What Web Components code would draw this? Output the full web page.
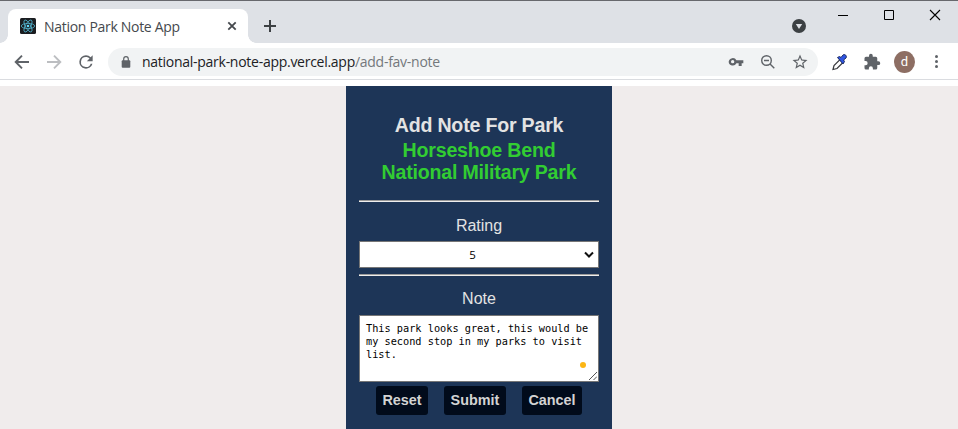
<!DOCTYPE html>
<html lang="en">
<head>
<meta charset="utf-8">
<title>Nation Park Note App</title>
<style>
html, body { margin: 0; height: 100%; overflow: hidden; }
body { background: #f0ecec; font-family: "Liberation Sans", Arial, sans-serif; }
</style>
</head>
<body>
<browser-window>
  <browser-tab slot="tab">Nation Park Note App</browser-tab>
  <browser-toolbar slot="toolbar">
    <span slot="host">national-park-note-app.vercel.app</span><span slot="path">/add-fav-note</span>
  </browser-toolbar>
  <note-panel>
    <span slot="title">Add Note For Park</span>
    <span slot="park">Horseshoe Bend<br>National Military Park</span>
    <rating-select slot="rating">5</rating-select>
    <note-area slot="note">This park looks great, this would be<br>my second stop in my parks to visit<br>list.</note-area>
    <note-button slot="actions" style="width:52px">Reset</note-button>
    <note-button slot="actions" style="width:62px">Submit</note-button>
    <note-button slot="actions" style="width:60px">Cancel</note-button>
  </note-panel>
</browser-window>
<script>
const define = (name, html) => {
  const t = document.createElement('template');
  t.innerHTML = html;
  customElements.define(name, class extends HTMLElement {
    constructor() {
      super();
      this.attachShadow({ mode: 'open' }).append(t.content.cloneNode(true));
    }
  });
};

define('browser-window', `
<style>
:host { display: flex; flex-direction: column; height: 100vh; }
.strip { flex: none; box-sizing: border-box; height: 43px; border-top: 1px solid #67686d; background: #dee1e6; display: flex; align-items: flex-end; padding-left: 8px; }
.plus { margin: 0 0 10px 15px; }
.spacer { flex: 1; }
.drop { margin: 0 31px 10px 0; }
.controls { align-self: flex-start; display: flex; gap: 34px; padding: 8px 17px 0 0; }
svg { display: block; }
main { flex: 1; display: flex; justify-content: center; min-height: 0; }
</style>
<div class="strip">
  <slot name="tab"></slot>
  <svg class="plus" width="14" height="14" stroke="#3c4043" stroke-width="2"><path d="M7 1v12M1 7h12"/></svg>
  <div class="spacer"></div>
  <svg class="drop" width="14" height="14"><circle cx="7" cy="7" r="7" fill="#3c4043"/><path d="M3.8 5h6.4L7 10z" fill="#dee1e6"/></svg>
  <div class="controls">
    <svg width="12" height="12" stroke="#000"><path d="M1 6.5h10"/></svg>
    <svg width="12" height="12" stroke="#000" fill="none"><path d="M1.500 1.500h9v9h-9z"/></svg>
    <svg width="12" height="12" stroke="#000" stroke-width="1.100"><path d="M1 1l10 10M11 1L1 11"/></svg>
  </div>
</div>
<slot name="toolbar"></slot>
<main><slot></slot></main>`);

define('browser-tab', `
<style>
:host { position: relative; display: flex; align-items: center; box-sizing: border-box; width: 240px; height: 34px; background: #fff; border-radius: 8px 8px 0 0; padding: 0 11px 0 12px; font: 14px "Open Sans", sans-serif; letter-spacing: -.3px; color: #45494d; }
:host::before, :host::after { content: ""; position: absolute; bottom: 0; width: 8px; height: 8px; }
:host::before { left: -8px; background: radial-gradient(circle at 0 0, #dee1e6 7.500px, #fff 8px); }
:host::after { right: -8px; background: radial-gradient(circle at 100% 0, #dee1e6 7.500px, #fff 8px); }
.label { flex: 1; margin-left: 8px; white-space: nowrap; }
svg { flex: none; display: block; }
</style>
<svg width="16" height="16" viewBox="0 0 16 16"><rect width="16" height="16" rx="1.500" fill="#1b1d20"/><g fill="none" stroke="#4faec8" stroke-width=".85"><ellipse cx="8" cy="8" rx="6.700" ry="2.600"/><ellipse cx="8" cy="8" rx="6.700" ry="2.600" transform="rotate(60 8 8)"/><ellipse cx="8" cy="8" rx="6.700" ry="2.600" transform="rotate(120 8 8)"/></g><circle cx="8" cy="8" r="1.300" fill="#61dafb"/></svg>
<span class="label"><slot></slot></span>
<svg width="10" height="10" stroke="#45494d" stroke-width="1.800"><path d="M1.300 1.300l7.400 7.400M8.700 1.300L1.300 8.700"/></svg>`);

define('browser-toolbar', `
<style>
:host { flex: none; box-sizing: border-box; display: flex; align-items: center; height: 43px; padding: 0 13px 6px 12px; background: linear-gradient(#fff 36px, #dadce0 36px, #dadce0 37px, #fff 37px); }
svg { display: block; flex: none; }
.back, .fwd { margin-right: 12px; }
.bar { flex: none; box-sizing: border-box; width: 710px; height: 28px; margin: 0 12px 0 12px; border-radius: 14px; background: #f1f3f4; display: flex; align-items: center; padding: 0 9px 0 13px; }
.url { flex: 1; display: flex; margin-left: 11px; font: 14px "Open Sans", sans-serif; letter-spacing: -.27px; color: #202124; white-space: nowrap; }
.path { color: #74787c; }
.key { margin-right: 16px; }
.lens { margin-right: 15px; }
.avatar { display: grid; place-items: center; width: 22px; height: 22px; border-radius: 50%; background: #8d6e63; color: #fff; font: 13px Roboto, sans-serif; margin: 0 12px 0 13px; }
.drop { margin-right: 15px; }
</style>
<svg class="back" width="20" height="20" viewBox="0 0 20 20" fill="none" stroke="#5f6368" stroke-width="1.900"><path d="M17 10H4.300M10 3.700L3.700 10l6.300 6.300"/></svg>
<svg class="fwd" width="20" height="20" viewBox="0 0 20 20" fill="none" stroke="#bcbec1" stroke-width="1.900"><path d="M3 10h12.700M10 3.700l6.300 6.300-6.300 6.300"/></svg>
<svg width="20" height="20" viewBox="0 0 24 24" fill="#5f6368"><path d="M17.650 6.350A7.960 7.960 0 0 0 12 4a8 8 0 1 0 7.730 10h-2.080A6 6 0 1 1 12 6c1.660 0 3.140.69 4.220 1.780L13 11h7V4z"/></svg>
<div class="bar">
  <svg width="10" height="12" viewBox="0 0 10 12"><rect x=".7" y="4.300" width="8.600" height="7.400" rx="1" fill="#5f6368"/><path d="M2.700 5V3a2.300 2.300 0 0 1 4.600 0v2" fill="none" stroke="#5f6368" stroke-width="1.200"/></svg>
  <div class="url"><slot name="host"></slot><span class="path"><slot name="path"></slot></span></div>
  <svg class="key" width="16" height="16" viewBox="0 0 24 24" fill="#5f6368"><path d="M12.650 9.500A6.200 6.200 0 0 0 1 11.500a6.200 6.200 0 0 0 11.650 2.500H16v4h4.500v-4H23V9.500zM7 14a2.500 2.500 0 1 1 0-5 2.500 2.500 0 0 1 0 5z"/></svg>
  <svg class="lens" width="16" height="16" viewBox="0 0 16 16" fill="none" stroke="#5f6368" stroke-width="1.400"><circle cx="6.500" cy="6.500" r="4.800"/><path d="M10 10l4.300 4.300M4 6.500h5"/></svg>
  <svg width="18" height="18" viewBox="0 0 24 24" fill="#5f6368"><path d="M22 9.240l-7.190-.62L12 2 9.190 8.630 2 9.240l5.460 4.730L5.820 21 12 17.270 18.180 21l-1.630-7.030L22 9.240zM12 15.400l-3.760 2.270 1-4.280-3.320-2.880 4.380-.38L12 6.100l1.710 4.040 4.380.38-3.320 2.880 1 4.280L12 15.400z"/></svg>
</div>
<svg class="drop" width="18" height="18" viewBox="0 0 18 18"><path d="M3 16.500l1-4 6-6 3 3L7 15.500z" fill="#fff" stroke="#38393d" stroke-width="1.200"/><path d="M7.500 4.500L9.500 3.500 11 4.500l2-2.500c1.600-1.500 4.500 1 3 3l-2.500 2 1 1.500L13 11z" fill="#2f55e3" stroke="#1d2b60"/></svg>
<svg width="18" height="18" viewBox="0 0 24 24" fill="#5f6368"><path d="M20.500 11H19V7a2 2 0 0 0-2-2h-4V3.500a2.500 2.500 0 0 0-5 0V5H4a2 2 0 0 0-2 2v3.800h1.500a2.700 2.700 0 0 1 0 5.400H2V20a2 2 0 0 0 2 2h3.800v-1.500a2.700 2.700 0 0 1 5.400 0V22H17a2 2 0 0 0 2-2v-4h1.500a2.500 2.500 0 0 0 0-5z"/></svg>
<div class="avatar">d</div>
<svg width="18" height="18" fill="#5f6368"><circle cx="9.500" cy="3.500" r="1.500"/><circle cx="9.500" cy="8.500" r="1.500"/><circle cx="9.500" cy="13.500" r="1.500"/></svg>`);

define('note-panel', `
<style>
:host { box-sizing: border-box; width: 266px; height: 100%; background: #1d3557; color: #e3e3e3; text-align: center; padding: 28px 13px 0; overflow: hidden; }
h1, h2 { margin: 0; font-size: 19.600px; letter-spacing: -.2px; line-height: 22px; font-weight: bold; white-space: nowrap; }
h2 { margin-top: 3px; color: #32cd32; }
.rule { height: 1px; border-top: 1px solid #9a9a9a; background: #eee; }
.r1 { margin-top: 17px; }
.r2 { margin-top: 6px; }
.label { font-size: 16px; line-height: 18px; }
.l1 { margin: 15px 0 6px; }
.l2 { margin: 14px 0 7px; }
.actions { display: flex; justify-content: center; gap: 16px; margin-top: 4px; }
</style>
<h1><slot name="title"></slot></h1>
<h2><slot name="park"></slot></h2>
<div class="rule r1"></div>
<div class="label l1">Rating</div>
<slot name="rating"></slot>
<div class="rule r2"></div>
<div class="label l2">Note</div>
<slot name="note"></slot>
<div class="actions"><slot name="actions"></slot></div>`);

define('rating-select', `
<style>
:host { display: flex; align-items: center; box-sizing: border-box; height: 27px; border: 1px solid #767676; background: #fff; color: #000; padding: 0 4px 0 1px; font: 11.500px "Open Sans", sans-serif; }
.value { flex: 1; text-align: center; }
</style>
<span class="value"><slot></slot></span>
<svg width="10" height="8" fill="none" stroke="#111" stroke-width="2"><path d="M1 1.500l4 4 4-4"/></svg>`);

define('note-area', `
<style>
:host { display: block; position: relative; box-sizing: border-box; height: 67px; border: 1px solid #767676; background: #fff; color: #000; text-align: left; padding: 6px 0 0 6px; font: 10.250px/13px "DejaVu Sans Mono", monospace; white-space: nowrap; }
.dot { position: absolute; right: 12px; bottom: 13px; width: 6px; height: 6px; border-radius: 50%; background: #fcb615; }
.grip { position: absolute; right: 1px; bottom: 1px; }
</style>
<slot></slot>
<i class="dot"></i>
<svg class="grip" width="8" height="8" stroke="#555"><path d="M0 8L8 0M4.500 8L8 4.500"/></svg>`);

define('note-button', `
<style>
:host { display: grid; place-items: center; box-sizing: border-box; height: 29px; border-radius: 3px; background: #010b1b; color: #d3d3d3; font: bold 14.400px/17px "Liberation Sans", Arial, sans-serif; }
</style>
<slot></slot>`);
</script>
</body>
</html>
